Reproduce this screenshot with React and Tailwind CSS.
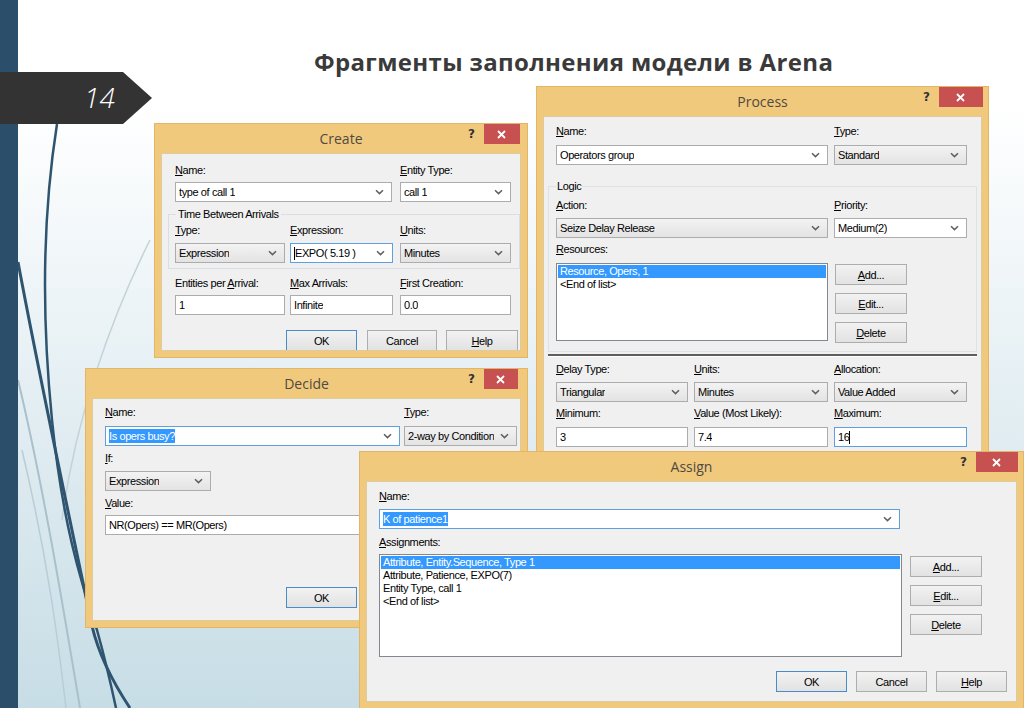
import React from "react";

const chev = (
  <svg width="9" height="6" viewBox="0 0 9 6" className="shrink-0">
    <path d="M1 1.2 4.5 4.6 8 1.2" fill="none" stroke="#5f5f5f" strokeWidth="1.5" />
  </svg>
);

function Lbl({ t, u = 0 }) {
  return (
    <div className="h-[14px] leading-[14px] whitespace-nowrap">
      {u < 0 ? (
        t
      ) : (
        <>
          {t.slice(0, u)}
          <span className="underline underline-offset-[1px]">{t[u]}</span>
          {t.slice(u + 1)}
        </>
      )}
    </div>
  );
}

function Box({ v, grey, arrow = true, focus, sel, caret, className = "" }) {
  const skin = grey ? "bg-linear-to-b from-[#f3f3f3] to-[#e3e3e3]" : "bg-white";
  const edge = focus ? "border-[#5d9fe0]" : "border-[#acacac]";
  return (
    <div className={`h-[20px] flex items-center justify-between border pl-[3px] pr-[7px] ${skin} ${edge} ${className}`}>
      <span className="flex items-center whitespace-nowrap overflow-hidden">
        {caret === "start" && <span className="w-px h-[13px] bg-black" />}
        {sel ? <span className="bg-[#3399ff] text-white leading-[14px]">{v}</span> : v}
        {caret === "end" && <span className="w-px h-[13px] bg-black" />}
      </span>
      {arrow && chev}
    </div>
  );
}

function Btn({ t, u = -1, def, className = "" }) {
  return (
    <div
      className={`h-[21px] flex items-center justify-center border bg-linear-to-b from-[#f2f2f2] to-[#e2e2e2] ${
        def ? "border-[#4a8cc9]" : "border-[#adadad]"
      } ${className}`}
    >
      <Lbl t={t} u={u} />
    </div>
  );
}

function Win({ title, pos, closeCls, children }) {
  return (
    <div className={`absolute flex flex-col bg-[#f1c97d] border border-[#e2b666] ${pos}`}>
      <div className="h-[29px] shrink-0 relative flex items-center justify-center">
        <span className="font-['Open_Sans',sans-serif] text-[14px] tracking-normal text-[#4f4a42]">{title}</span>
        <div className={`absolute top-0 flex items-start ${closeCls}`}>
          <span className="font-['DejaVu_Sans',sans-serif] font-bold text-[12px] text-[#333] mr-[9px] mt-[1px]">?</span>
          <div className="h-[20px] w-full bg-[#c75050] flex items-center justify-center">
            <svg width="9" height="9" viewBox="0 0 9 9">
              <path d="M1 1 8 8M8 1 1 8" stroke="#fff" strokeWidth="1.8" />
            </svg>
          </div>
        </div>
      </div>
      <div className="flex-1 mx-[6px] mb-[6px] bg-[#f0f0f0] border border-[#dccb9f] overflow-hidden">{children}</div>
    </div>
  );
}

function Item({ t, on }) {
  return (
    <div className={`h-[13px] leading-[13px] pl-[2px] whitespace-nowrap ${on ? "bg-[#3399ff] text-white" : ""}`}>{t}</div>
  );
}

export default function App() {
  return (
    <div className="relative w-[1024px] h-[708px] overflow-hidden flex bg-linear-to-b from-white from-[15%] to-[#c7dde6] font-['Liberation_Sans',Arial,sans-serif] text-[11px] tracking-[-0.4px] text-black">
      <svg className="absolute inset-0" width="1024" height="708" viewBox="0 0 1024 708">
        <path d="M150 240 C110 320 75 420 62 520" fill="none" stroke="#c3d3da" strokeWidth="1.5" />
        <path d="M18 380 C42 480 62 600 80 708" fill="none" stroke="#a9c1cb" strokeWidth="2" />
        <path d="M22 450 C48 560 58 640 66 708" fill="none" stroke="#b8cdd5" strokeWidth="1.5" />
        <path d="M57 124 C45 200 40 300 52 420 C62 520 80 580 97 630 C104 655 110 680 116 708" fill="none" stroke="#2e5470" strokeWidth="2.5" />
        <path d="M18 262 C40 380 70 520 92 626 C100 660 118 690 130 708" fill="none" stroke="#2e5470" strokeWidth="3" />
      </svg>

      <div className="relative w-[18px] h-full shrink-0 bg-[#2b4e6a]" />

      <div className="relative flex-1">
        <div className="pt-[46px] pl-[296px] font-['Open_Sans',sans-serif] font-bold text-[24px] leading-[32px] tracking-[0.35px] text-[#3a3a3a] whitespace-nowrap">
          Фрагменты заполнения модели в Arena
        </div>
      </div>

      {/* slide number badge */}
      <div className="absolute left-0 top-[72px] w-[152px] h-[52px]">
        <svg width="152" height="52" viewBox="0 0 152 52" className="absolute inset-0">
          <polygon points="0,0 123,0 152,26 123,52 0,52" fill="#333333" />
        </svg>
        <span className="absolute left-[84px] top-[8px] font-['Open_Sans',sans-serif] font-light italic text-[28px] leading-[34px] tracking-normal text-white">14</span>
      </div>

      {/* Create */}
      <Win title="Create" pos="left-[154px] top-[123px] w-[374px] h-[235px]" closeCls="right-[7px] w-[52px]">
        <div className="pt-[9px]">
          <div className="flex gap-[8px] pl-[13px]">
            <div className="w-[217px]">
              <Lbl t="Name:" />
              <Box v="type of call 1" className="mt-[5px]" />
            </div>
            <div className="w-[111px]">
              <Lbl t="Entity Type:" />
              <Box v="call 1" className="mt-[5px]" />
            </div>
          </div>
          <fieldset className="ml-[6px] mt-[5px] w-[352px] border border-[#d8dee2] pl-[6px] pb-[5px]">
            <legend className="ml-[1px] px-[2px] h-[14px] leading-[14px]">Time Between Arrivals</legend>
            <div className="flex mt-[2px]">
              <div className="w-[110px]">
                <Lbl t="Type:" />
                <Box v="Expression" grey className="mt-[6px]" />
              </div>
              <div className="w-[103px] ml-[5px]">
                <Lbl t="Expression:" />
                <Box v="EXPO( 5.19 )" focus caret="start" className="mt-[6px]" />
              </div>
              <div className="w-[111px] ml-[7px]">
                <Lbl t="Units:" />
                <Box v="Minutes" grey className="mt-[6px]" />
              </div>
            </div>
          </fieldset>
          <div className="flex pl-[13px] mt-[7px]">
            <div className="w-[110px]">
              <Lbl t="Entities per Arrival:" u={13} />
              <Box v="1" arrow={false} className="mt-[5px]" />
            </div>
            <div className="w-[103px] ml-[5px]">
              <Lbl t="Max Arrivals:" />
              <Box v="Infinite" arrow={false} className="mt-[5px]" />
            </div>
            <div className="w-[111px] ml-[7px]">
              <Lbl t="First Creation:" />
              <Box v="0.0" arrow={false} className="mt-[5px]" />
            </div>
          </div>
          <div className="flex pl-[124px] mt-[15px]">
            <Btn t="OK" def className="w-[71px]" />
            <Btn t="Cancel" className="w-[70px] ml-[10px]" />
            <Btn t="Help" u={0} className="w-[72px] ml-[9px]" />
          </div>
        </div>
      </Win>

      {/* Process */}
      <Win title="Process" pos="left-[536px] top-[86px] w-[453px] h-[400px]" closeCls="right-[5px] w-[60px]">
        <div className="pt-[7px]">
          <div className="flex gap-[6px] pl-[12px]">
            <div className="w-[272px]">
              <Lbl t="Name:" />
              <Box v="Operators group" className="mt-[7px]" />
            </div>
            <div className="w-[133px]">
              <Lbl t="Type:" />
              <Box v="Standard" grey className="mt-[7px]" />
            </div>
          </div>
          <fieldset className="ml-[4px] mt-[14px] w-[429px] border border-[#dde2e5] pl-[7px] pb-[8px]">
            <legend className="px-[1px] h-[14px] leading-[14px]">Logic</legend>
            <div className="flex gap-[6px] mt-[5px]">
              <div className="w-[272px]">
                <Lbl t="Action:" />
                <Box v="Seize Delay Release" grey className="mt-[6px]" />
              </div>
              <div className="w-[133px]">
                <Lbl t="Priority:" />
                <Box v="Medium(2)" className="mt-[6px]" />
              </div>
            </div>
            <div className="mt-[4px]">
              <Lbl t="Resources:" />
            </div>
            <div className="flex mt-[7px]">
              <div className="w-[272px] h-[78px] bg-white border border-[#828790] p-px">
                <Item t="Resource, Opers, 1" on />
                <Item t="<End of list>" />
              </div>
              <div className="ml-[7px] w-[72px] flex flex-col gap-[8px] pt-px">
                <Btn t="Add..." u={0} />
                <Btn t="Edit..." u={0} />
                <Btn t="Delete" u={0} />
              </div>
            </div>
          </fieldset>
          <div className="ml-[4px] mt-[2px] w-[429px] h-[3px] border-t-2 border-t-[#5e5e5e] border-b border-b-white" />
          <div className="flex pl-[12px] mt-[5px]">
            <div className="w-[132px]">
              <Lbl t="Delay Type:" />
              <Box v="Triangular" grey className="mt-[6px]" />
            </div>
            <div className="w-[134px] ml-[6px]">
              <Lbl t="Units:" />
              <Box v="Minutes" grey className="mt-[6px]" />
            </div>
            <div className="w-[133px] ml-[6px]">
              <Lbl t="Allocation:" />
              <Box v="Value Added" grey className="mt-[6px]" />
            </div>
          </div>
          <div className="flex pl-[12px] mt-[4px]">
            <div className="w-[132px]">
              <Lbl t="Minimum:" />
              <Box v="3" arrow={false} className="mt-[7px]" />
            </div>
            <div className="w-[134px] ml-[6px]">
              <Lbl t="Value (Most Likely):" />
              <Box v="7.4" arrow={false} className="mt-[7px]" />
            </div>
            <div className="w-[133px] ml-[6px]">
              <Lbl t="Maximum:" />
              <Box v="16" arrow={false} focus caret="end" className="mt-[7px]" />
            </div>
          </div>
        </div>
      </Win>

      {/* Decide */}
      <Win title="Decide" pos="left-[85px] top-[368px] w-[443px] h-[260px]" closeCls="right-[9px] w-[50px]">
        <div className="pt-[6px] pl-[12px]">
          <div className="flex gap-[4px]">
            <div className="w-[295px]">
              <Lbl t="Name:" />
              <Box v="Is opers busy?" sel focus className="mt-[7px]" />
            </div>
            <div className="w-[113px]">
              <Lbl t="Type:" />
              <Box v="2-way by Condition" grey className="mt-[7px]" />
            </div>
          </div>
          <div className="mt-[5px]">
            <Lbl t="If:" />
            <Box v="Expression" grey className="mt-[6px] w-[106px]" />
          </div>
          <div className="mt-[5px]">
            <Lbl t="Value:" />
            <Box v="NR(Opers) == MR(Opers)" arrow={false} className="mt-[5px] w-[410px]" />
          </div>
          <Btn t="OK" def className="w-[71px] ml-[181px] mt-[52px]" />
        </div>
      </Win>

      {/* Assign */}
      <Win title="Assign" pos="left-[359px] top-[451px] w-[665px] h-[258px]" closeCls="right-[5px] w-[58px]">
        <div className="pt-[7px] pl-[12px]">
          <Lbl t="Name:" />
          <Box v="K of patience1" sel focus className="mt-[6px] w-[521px]" />
          <div className="mt-[6px]">
            <Lbl t="Assignments:" />
          </div>
          <div className="flex mt-[5px]">
            <div className="w-[523px] h-[103px] bg-white border border-[#828790] p-px">
              <Item t="Attribute, Entity.Sequence, Type 1" on />
              <Item t="Attribute, Patience, EXPO(7)" />
              <Item t="Entity Type, call 1" />
              <Item t="<End of list>" />
            </div>
            <div className="ml-[8px] w-[72px] flex flex-col gap-[8px] pt-[2px]">
              <Btn t="Add..." u={0} />
              <Btn t="Edit..." u={0} />
              <Btn t="Delete" u={0} />
            </div>
          </div>
          <div className="flex justify-end pr-[9px] mt-[14px]">
            <Btn t="OK" def className="w-[71px]" />
            <Btn t="Cancel" className="w-[71px] ml-[9px]" />
            <Btn t="Help" u={0} className="w-[71px] ml-[9px]" />
          </div>
        </div>
      </Win>
    </div>
  );
}
